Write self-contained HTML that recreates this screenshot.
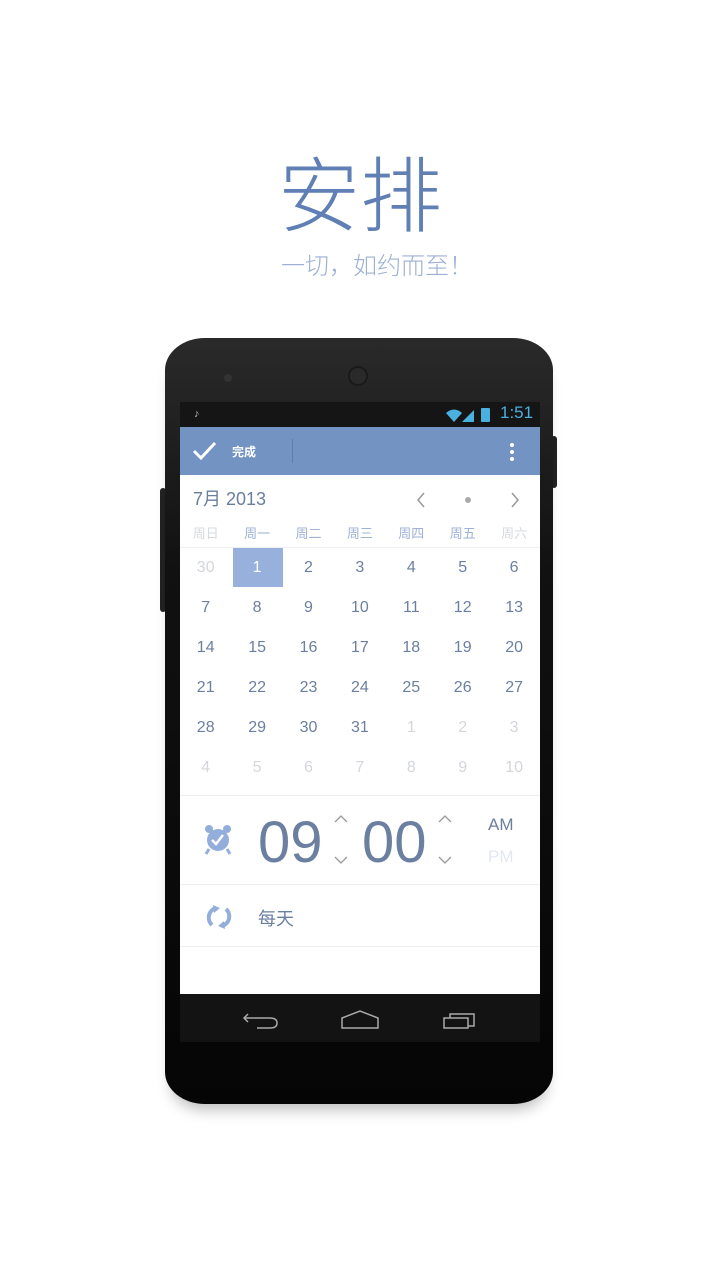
<!DOCTYPE html>
<html><head><meta charset="utf-8"><style>
*{margin:0;padding:0;box-sizing:border-box}
body{width:720px;height:1280px;background:#fff;position:relative;overflow:hidden;font-family:"Liberation Sans","Noto Sans CJK SC",sans-serif}
.abs{position:absolute}
.title{left:0;width:720px;top:140px;text-align:center;font-size:82px;color:#5f7fb5;line-height:100px;font-family:"Noto Sans CJK SC",sans-serif;font-weight:300}
.sub{left:0;width:720px;top:248px;padding-left:34px;text-align:center;font-size:24px;color:#9db0d2;line-height:32px;font-family:"Noto Sans CJK SC",sans-serif;font-weight:300}
.phone{left:165px;top:338px;width:388px;height:766px;background:linear-gradient(#2a2a2a,#111 30%,#050505);border-radius:40px/32px;box-shadow:0 12px 14px -6px rgba(0,0,0,.25)}
.screen{left:180px;top:402px;width:360px;height:640px;background:#fff;overflow:hidden}
.cell{position:absolute;width:51.4px;text-align:center;font-size:16px}
</style></head><body>
<div class="abs title">安排</div>
<div class="abs sub">一切，如约而至！</div>
<div class="abs" style="left:160px;top:488px;width:6px;height:124px;background:#222;border-radius:3px"></div>
<div class="abs" style="left:551px;top:436px;width:6px;height:52px;background:#222;border-radius:3px"></div>
<div class="abs phone"></div>
<div class="abs" style="left:224px;top:374px;width:8px;height:8px;border-radius:50%;background:#333"></div>
<div class="abs" style="left:348px;top:366px;width:20px;height:20px;border-radius:50%;background:#2a2a2a;border:2px solid #1a1a1a"></div>
<div class="abs screen">
 <div class="abs" style="left:0;top:0;width:360px;height:25px;background:#151515"></div>
 <div class="abs" style="left:14px;top:6px;width:7px;height:12px;color:#bbb;font-size:11px">♪</div>
 <div class="abs" style="left:320px;top:1px;font-size:17px;color:#4ab0e0">1:51</div>
 <div class="abs" style="left:301px;top:6px;width:9px;height:14px;background:#4ab0e0;border-radius:1px"></div>
 <svg class="abs" style="left:262px;top:5px" width="36" height="16"><path d="M4 6 Q12 -1 20 6 L12 15Z" fill="#4ab0e0"/><path d="M20 15 L32 3 L32 15Z" fill="#4ab0e0"/></svg>
 <div class="abs" style="left:0;top:25px;width:360px;height:48px;background:#7393c3"></div>
 <svg class="abs" style="left:12px;top:38px" width="26" height="22"><path d="M2 11 L9 18 L23 3" stroke="#fff" stroke-width="3" fill="none"/></svg>
 <div class="abs" style="left:52px;top:41px;font-size:12px;color:#fff;font-weight:bold">完成</div>
 <div class="abs" style="left:112px;top:37px;width:1px;height:24px;background:#5c7db0"></div>
 <div class="abs" style="left:330px;top:41px;width:4px;height:4px;border-radius:50%;background:#fff;box-shadow:0 7px 0 #fff,0 14px 0 #fff"></div>
 <div class="abs" style="left:13px;top:83px;font-size:18px;color:#6a7ea0">7月 2013</div>
 <svg class="abs" style="left:234px;top:88px" width="110" height="20"><path d="M10 3 L4 10 L10 17" stroke="#999" fill="none" stroke-width="1.5"/><circle cx="54" cy="10" r="3" fill="#aaa"/><path d="M98 3 L104 10 L98 17" stroke="#999" fill="none" stroke-width="1.5"/></svg>
 <div class="abs" style="left:53px;top:145px;width:50px;height:40px;background:#97b1dc"></div>
 <div id="cal"></div>
 <div class="abs" style="left:0;top:393px;width:360px;height:1px;background:#eee"></div>
 <svg class="abs" style="left:23px;top:421px" width="30" height="32"><circle cx="15" cy="17" r="11" fill="#94aedb"/><circle cx="6" cy="6" r="4" fill="#94aedb"/><circle cx="24" cy="6" r="4" fill="#94aedb"/><path d="M9 17 L13 21 L20 12" stroke="#fff" stroke-width="2.5" fill="none"/><path d="M6 26 L3 31 M24 26 L27 31" stroke="#94aedb" stroke-width="3"/></svg>
 <div class="abs" style="left:78px;top:406px;font-size:58px;color:#6b7fa0;line-height:70px">09</div>
 <div class="abs" style="left:182px;top:406px;font-size:58px;color:#6b7fa0;line-height:70px">00</div>
 <svg class="abs" style="left:152px;top:410px" width="130" height="56"><g stroke="#999" fill="none" stroke-width="1.3"><path d="M3 10 L9 4 L15 10"/><path d="M3 45 L9 51 L15 45"/><path d="M107 10 L113 4 L119 10"/><path d="M107 45 L113 51 L119 45"/></g></svg>
 <div class="abs" style="left:308px;top:413px;font-size:17px;color:#6b7fa0">AM</div>
 <div class="abs" style="left:308px;top:445px;font-size:17px;color:#e3e8f0">PM</div>
 <div class="abs" style="left:0;top:482px;width:360px;height:1px;background:#eee"></div>
 <svg class="abs" style="left:24px;top:502px" width="30" height="26"><path d="M12 4 A10 10 0 0 0 8 21" stroke="#94aedb" stroke-width="4" fill="none"/><path d="M18 22 A10 10 0 0 0 22 5" stroke="#94aedb" stroke-width="4" fill="none"/><path d="M9 1 L16 4 L10 9Z M21 25 L14 22 L20 17Z" fill="#94aedb"/></svg>
 <div class="abs" style="left:78px;top:503px;font-size:18px;color:#6b7fa0">每天</div>
 <div class="abs" style="left:0;top:544px;width:360px;height:1px;background:#eee"></div>
 <div class="abs" style="left:0;top:592px;width:360px;height:48px;background:#131313"></div>
 <svg class="abs" style="left:60px;top:604px" width="250" height="24"><g stroke="#aaa" stroke-width="1.5" fill="none"><path d="M8 8 L4 12 L8 16 M4 12 L30 12 Q37 12 37 17 Q37 22 30 22 L17 22"/><path d="M102 12 L120 5 L138 12 L138 22 L102 22Z"/><path d="M204 12 L228 12 L228 22 L204 22Z M210 12 L210 8 L234 8 L234 20 L228 20"/></g></svg>
</div>
<script>
var c=document.getElementById('cal'),h='';
var wd=['周日','周一','周二','周三','周四','周五','周六'];
for(var i=0;i<7;i++){var col=(i==0||i==6)?'#d6d9de':'#9db2d6';h+='<div class="cell" style="left:'+(i*51.4)+'px;top:121px;font-size:13px;color:'+col+'">'+wd[i]+'</div>';}
h+='<div class="abs" style="left:0;top:145px;width:360px;height:1px;background:#f0f0f0"></div>';
var d=[30];for(var i=1;i<=31;i++)d.push(i);for(var i=1;i<=10;i++)d.push(i);
for(var k=0;k<42;k++){var r=Math.floor(k/7),cc=k%7;var grey=(k==0||k>31);var col=grey?'#d3d6db':(k==1?'#fff':'#6b7fa0');
h+='<div class="cell" style="left:'+(cc*51.4)+'px;top:'+(157+r*40)+'px;color:'+col+'">'+d[k]+'</div>';}
c.innerHTML=h;
</script>
</body></html>
